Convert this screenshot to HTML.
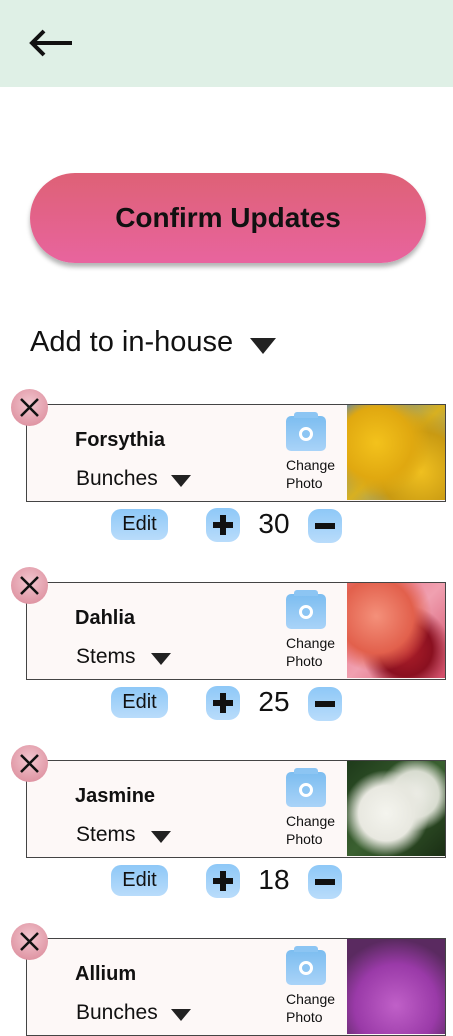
<!DOCTYPE html>
<html><head><style>
*{margin:0;padding:0;box-sizing:border-box}
body{width:453px;height:1018px;overflow:hidden;background:#fff;font-family:"Liberation Sans",sans-serif;position:relative}
.hdr{position:absolute;left:0;top:0;width:453px;height:87px;background:#dff0e6}
.btn{position:absolute;left:30px;top:173px;width:396px;height:90px;border-radius:45px;background:linear-gradient(#de6176,#e8649e);box-shadow:0 4px 5px rgba(0,0,0,.3);text-align:center;line-height:90px;font-size:28px;font-weight:bold;color:#111}
.add{position:absolute;left:30px;top:326px;font-size:29px;color:#111}
.tri{position:absolute;width:0;height:0;border-left:13px solid transparent;border-right:13px solid transparent;border-top:16px solid #222}
.card{position:absolute;left:26px;width:420px;height:98px;border:1.5px solid #444;background:#fdf8f7}
.img{position:absolute;right:0;top:0;width:98px;height:95px}
.x{position:absolute;left:11px;width:37px;height:37px;border-radius:50%;background:radial-gradient(circle at 50% 40%,#f2c6cf,#d98595)}
.name{position:absolute;left:48px;top:24px;font-size:20px;font-weight:bold;color:#111}
.unit{position:absolute;left:49px;top:62px;font-size:21px;color:#111}
.cam{position:absolute;left:259px;top:11px;width:40px;height:35px;border-radius:5px;background:linear-gradient(#7cbdf0,#a9d3f8)}
.cam:before{content:"";position:absolute;left:8px;top:-4px;width:24px;height:6px;background:#8cc5f3;border-radius:3px 3px 0 0}
.cam:after{content:"";position:absolute;left:13px;top:11px;width:8px;height:8px;border:3px solid #fff;border-radius:50%;background:#8cc5f3}
.chg{position:absolute;left:259px;top:51px;font-size:14px;line-height:18px;color:#111}
.edit{position:absolute;left:111px;width:57px;height:31px;border-radius:10px;background:linear-gradient(#8ec8f7,#b9dcfb);text-align:center;line-height:31px;font-size:20px;color:#111}
.pm{position:absolute;width:34px;height:34px;border-radius:11px;background:linear-gradient(#8ec8f7,#b9dcfb)}
.pm i{position:absolute;background:#111}
.num{position:absolute;left:252px;width:44px;text-align:center;font-size:28px;color:#111}
</style></head><body>
<div class="hdr"><svg style="position:absolute;left:28px;top:28px" width="46" height="32" viewBox="0 0 46 32"><path d="M44 15H5M16 3L4 15l12 12" fill="none" stroke="#111" stroke-width="4"/></svg></div>
<div class="btn">Confirm Updates</div>
<div class="add">Add to in-house</div>
<div class="tri" style="left:250px;top:338px"></div>

<!-- card template repeated -->
<div class="card" style="top:404px"><div class="img" style="background:radial-gradient(circle at 30% 40%,#f3c21c,#e0a810 40%,transparent 60%),radial-gradient(circle at 75% 70%,#f0c020,#c99a12 40%,transparent 60%),linear-gradient(135deg,#3f7fd0,#d8b020 50%,#4b86d8)"></div>
<div class="name">Forsythia</div><div class="unit">Bunches</div><div class="tri" style="left:144px;top:70px;border-left-width:10px;border-right-width:10px;border-top-width:12px"></div>
<div class="cam"></div><div class="chg">Change<br>Photo</div></div>
<div class="x" style="top:389px"><svg width="37" height="37"><path d="M10 10L27 27M27 10L10 27" stroke="#111" stroke-width="2.5"/></svg></div>
<div class="edit" style="top:509px">Edit</div>
<div class="pm" style="left:206px;top:508px"><i style="left:7px;top:14px;width:20px;height:6px"></i><i style="left:14px;top:7px;width:6px;height:20px"></i></div>
<div class="num" style="top:508px">30</div>
<div class="pm" style="left:308px;top:509px"><i style="left:7px;top:14px;width:20px;height:6px"></i></div>

<div class="card" style="top:582px"><div class="img" style="background:radial-gradient(circle at 30% 35%,#f4907a,#e2604c 40%,transparent 60%),radial-gradient(circle at 60% 70%,#b0202a,#8a1020 30%,transparent 50%),linear-gradient(135deg,#e86a80,#f0a0b0 50%,#d04a66)"></div>
<div class="name">Dahlia</div><div class="unit">Stems</div><div class="tri" style="left:124px;top:70px;border-left-width:10px;border-right-width:10px;border-top-width:12px"></div>
<div class="cam"></div><div class="chg">Change<br>Photo</div></div>
<div class="x" style="top:567px"><svg width="37" height="37"><path d="M10 10L27 27M27 10L10 27" stroke="#111" stroke-width="2.5"/></svg></div>
<div class="edit" style="top:687px">Edit</div>
<div class="pm" style="left:206px;top:686px"><i style="left:7px;top:14px;width:20px;height:6px"></i><i style="left:14px;top:7px;width:6px;height:20px"></i></div>
<div class="num" style="top:686px">25</div>
<div class="pm" style="left:308px;top:687px"><i style="left:7px;top:14px;width:20px;height:6px"></i></div>

<div class="card" style="top:760px"><div class="img" style="background:radial-gradient(circle at 40% 55%,#f4f4ee,#e8e8e0 35%,transparent 55%),radial-gradient(circle at 70% 35%,#eeeee8,#d8dcd0 25%,transparent 40%),linear-gradient(135deg,#1e3a1a,#3a6030 50%,#1a2e14)"></div>
<div class="name">Jasmine</div><div class="unit">Stems</div><div class="tri" style="left:124px;top:70px;border-left-width:10px;border-right-width:10px;border-top-width:12px"></div>
<div class="cam"></div><div class="chg">Change<br>Photo</div></div>
<div class="x" style="top:745px"><svg width="37" height="37"><path d="M10 10L27 27M27 10L10 27" stroke="#111" stroke-width="2.5"/></svg></div>
<div class="edit" style="top:865px">Edit</div>
<div class="pm" style="left:206px;top:864px"><i style="left:7px;top:14px;width:20px;height:6px"></i><i style="left:14px;top:7px;width:6px;height:20px"></i></div>
<div class="num" style="top:864px">18</div>
<div class="pm" style="left:308px;top:865px"><i style="left:7px;top:14px;width:20px;height:6px"></i></div>

<div class="card" style="top:938px"><div class="img" style="background:radial-gradient(circle at 50% 70%,#c060c8,#9a3aa8 50%,#5a2a60 80%)"></div>
<div class="name">Allium</div><div class="unit">Bunches</div><div class="tri" style="left:144px;top:70px;border-left-width:10px;border-right-width:10px;border-top-width:12px"></div>
<div class="cam"></div><div class="chg">Change<br>Photo</div></div>
<div class="x" style="top:923px"><svg width="37" height="37"><path d="M10 10L27 27M27 10L10 27" stroke="#111" stroke-width="2.5"/></svg></div>
</body></html>
